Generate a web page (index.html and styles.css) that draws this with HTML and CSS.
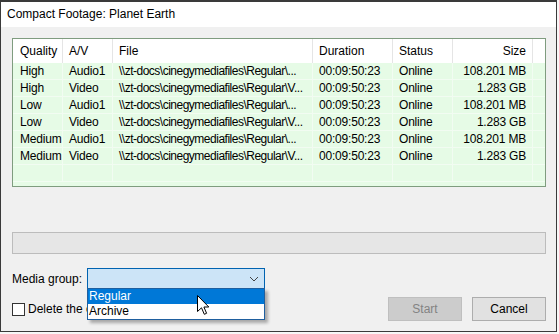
FILE: index.html
```html
<!DOCTYPE html>
<html lang="en">
<head>
  <meta charset="UTF-8" />
  <title>Compact Footage: Planet Earth</title>
  <link rel="stylesheet" href="styles.css">
</head>
<body>
  <div class="janela">
    <div class="titulo">Compact Footage: Planet Earth</div>

    <div class="corpo">
      <div class="lista">
        <div class="linha cabecalho">
          <span class="c-qual">Quality</span>
          <span class="c-av">A/V</span>
          <span class="c-file">File</span>
          <span class="c-dur">Duration</span>
          <span class="c-stat">Status</span>
          <span class="c-size">Size</span>
          <span class="c-resto"></span>
        </div>
        <div class="linha">
          <span class="c-qual">High</span><span class="c-av">Audio1</span>
          <span class="c-file">\\zt-docs\cinegymediafiles\Regular\...</span>
          <span class="c-dur">00:09:50:23</span><span class="c-stat">Online</span>
          <span class="c-size">108.201 MB</span><span class="c-resto"></span>
        </div>
        <div class="linha">
          <span class="c-qual">High</span><span class="c-av">Video</span>
          <span class="c-file">\\zt-docs\cinegymediafiles\Regular\V...</span>
          <span class="c-dur">00:09:50:23</span><span class="c-stat">Online</span>
          <span class="c-size">1.283 GB</span><span class="c-resto"></span>
        </div>
        <div class="linha">
          <span class="c-qual">Low</span><span class="c-av">Audio1</span>
          <span class="c-file">\\zt-docs\cinegymediafiles\Regular\...</span>
          <span class="c-dur">00:09:50:23</span><span class="c-stat">Online</span>
          <span class="c-size">108.201 MB</span><span class="c-resto"></span>
        </div>
        <div class="linha">
          <span class="c-qual">Low</span><span class="c-av">Video</span>
          <span class="c-file">\\zt-docs\cinegymediafiles\Regular\V...</span>
          <span class="c-dur">00:09:50:23</span><span class="c-stat">Online</span>
          <span class="c-size">1.283 GB</span><span class="c-resto"></span>
        </div>
        <div class="linha">
          <span class="c-qual">Medium</span><span class="c-av">Audio1</span>
          <span class="c-file">\\zt-docs\cinegymediafiles\Regular\...</span>
          <span class="c-dur">00:09:50:23</span><span class="c-stat">Online</span>
          <span class="c-size">108.201 MB</span><span class="c-resto"></span>
        </div>
        <div class="linha">
          <span class="c-qual">Medium</span><span class="c-av">Video</span>
          <span class="c-file">\\zt-docs\cinegymediafiles\Regular\V...</span>
          <span class="c-dur">00:09:50:23</span><span class="c-stat">Online</span>
          <span class="c-size">1.283 GB</span><span class="c-resto"></span>
        </div>
        <div class="linha">
          <span class="c-qual"></span><span class="c-av"></span><span class="c-file"></span>
          <span class="c-dur"></span><span class="c-stat"></span><span class="c-size"></span><span class="c-resto"></span>
        </div>
      </div>

      <div class="progresso"></div>

      <div class="grupo">
        <label>Media group:</label>
        <div class="combo">
          <svg class="seta" width="10" height="6" viewBox="0 0 10 6">
            <path d="M1 1 L5 5 L9 1" fill="none" stroke="#444" stroke-width="1"/>
          </svg>
          <ul class="opcoes">
            <li class="ativa">Regular</li>
            <li>Archive</li>
          </ul>
        </div>
      </div>

      <div class="rodape">
        <div class="marcar">
          <span class="caixa"></span>
          <span>Delete the original files</span>
        </div>
        <div class="botoes">
          <button disabled>Start</button>
          <button>Cancel</button>
        </div>
      </div>
    </div>
  </div>

  <svg class="cursor" width="13" height="20" viewBox="0 0 13 20">
    <path d="M0.5 0.5 L0.5 16.5 L4.5 12.8 L7.3 19.3 L9.6 18.3 L6.9 12 L11.8 12 Z"
          fill="#fff" stroke="#000" stroke-width="1" stroke-linejoin="miter"/>
  </svg>
</body>
</html>
```

FILE: styles.css
```css
body {
  margin: 0;
  font-family: "Liberation Sans", Arial, sans-serif;
  font-size: 12px;
  color: #000;
  background-color: #f7f7f7;
  position: relative;
  width: 559px;
  height: 334px;
  overflow: hidden;
}

.janela {
  width: 555px;
  height: 329px;
  border: 1px solid #3a3a3a;
  border-top-width: 2px;
  background-color: #f0f0f0;
  display: flex;
  flex-direction: column;
}

.titulo {
  height: 25px;
  line-height: 24px;
  padding-left: 6px;
  background-color: #fff;
}

.corpo {
  padding: 11px 10px 0 11px;
  display: flex;
  flex-direction: column;
}

.lista {
  border: 1px solid #7f9c7f;
  background-color: #e6fbe6;
  height: 147px;
  overflow: hidden;
}

.linha {
  display: flex;
  height: 17px;
  line-height: 16px;
  border-bottom: 1px solid #f2fcf2;
  box-sizing: border-box;
  letter-spacing: -0.2px;
}

.linha span {
  box-sizing: border-box;
  padding: 0 6px;
  border-right: 1px solid #f2fcf2;
  white-space: nowrap;
  overflow: hidden;
}

.cabecalho {
  height: 24px;
  line-height: 24px;
  background-color: #fff;
  border-bottom: none;
  letter-spacing: 0;
}

.cabecalho span {
  border-right: 1px solid #e5e5e5;
}

.c-qual { width: 50px; padding-left: 7px !important; }
.c-av { width: 50px; }
.c-file { width: 200px; letter-spacing: -0.5px; }
.c-dur { width: 80px; }
.c-stat { width: 60px; }
.c-size { width: 80px; text-align: right; }
.c-resto { flex: 1; border-right: none !important; }

.cabecalho .c-file { letter-spacing: 0; }

.progresso {
  margin-top: 45px;
  height: 22px;
  box-sizing: border-box;
  border: 1px solid #bcbcbc;
  background-color: #e6e6e6;
}

.grupo {
  margin-top: 14px;
  display: flex;
  align-items: center;
}

.grupo label {
  width: 75px;
}

.combo {
  position: relative;
  width: 178px;
  height: 21px;
  box-sizing: border-box;
  border: 1px solid #0063b1;
  background-color: #cce4f7;
}

.seta {
  position: absolute;
  right: 5px;
  top: 7px;
}

.opcoes {
  position: absolute;
  left: -1px;
  top: 19px;
  width: 178px;
  margin: 0;
  padding: 0;
  list-style: none;
  box-sizing: border-box;
  border: 1px solid #1f5f9f;
  background-color: #fff;
  box-shadow: 3px 3px 3px rgba(0,0,0,0.3);
  z-index: 2;
}

.opcoes li {
  height: 15px;
  line-height: 15px;
  padding-left: 1px;
}

.opcoes .ativa {
  background-color: #0078d7;
  color: #fff;
}

.rodape {
  margin-top: 8px;
  display: flex;
  justify-content: space-between;
  align-items: center;
}

.marcar {
  display: flex;
  align-items: center;
  gap: 3px;
}

.caixa {
  width: 13px;
  height: 13px;
  box-sizing: border-box;
  border: 1px solid #333;
  background-color: #fff;
}

.botoes {
  display: flex;
  gap: 10px;
}

button {
  width: 74px;
  height: 24px;
  font-family: inherit;
  font-size: 12px;
  background-color: #e1e1e1;
  border: 1px solid #adadad;
  color: #000;
  padding: 0;
}

button:disabled {
  background-color: #cccccc;
  border-color: #bfbfbf;
  color: #838383;
}

.cursor {
  position: absolute;
  left: 197px;
  top: 295px;
  z-index: 5;
}
```
